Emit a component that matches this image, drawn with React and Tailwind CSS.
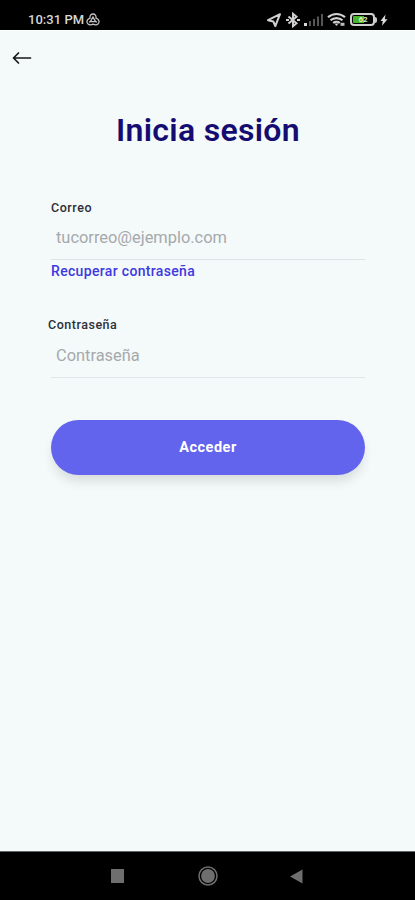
import { useState } from 'react'

function StatusBar() {
  return (
    <div className="h-[30px] bg-black flex items-center justify-between pl-[28px] pr-[27px] pt-[9px] shrink-0">
      <div className="flex items-center gap-[2px]">
        <span className="text-[13px] leading-[16px] font-medium text-[#d6d6d6] tracking-[0.030px] whitespace-nowrap">10:31 PM</span>
        <svg width="14" height="14" viewBox="0 0 14 14" fill="none" stroke="#c4c4c4" strokeWidth="1.300">
          <path d="M4 5.200C3.600 2.500 5 1 7 1s3.400 1.500 3 4.200C12.500 6 13.600 8 12.700 10c-1 2-3.500 2.300-5.700 1.200C4.800 12.300 2.300 12 1.300 10 .4 8 1.500 6 4 5.200z" />
          <path d="M7 4l2.600 4.600H4.400zM3 9.200l1.400-.6M11 9.200l-1.400-.6" />
        </svg>
      </div>
      <div className="flex items-center">
        <svg width="16" height="16" viewBox="0 0 16 16" fill="none" stroke="#d0d0d0" strokeWidth="2" strokeLinejoin="round">
          <path d="M14 2.200L2 8.200l5.300 1.300 2 4.600z" />
        </svg>
        <svg className="ml-[3px]" width="16" height="16" viewBox="0 0 16 16" fill="none" stroke="#d0d0d0" strokeWidth="2">
          <path d="M3.500 4.500l8 6.800L8 14.200V1.800l3.500 2.900-8 6.800" />
          <path d="M1 8h3M12 8h3" strokeWidth="2.200" />
        </svg>
        <svg className="ml-[3px]" width="20" height="14" viewBox="0 0 20 14">
          <path d="M0 10h3v3H0z" fill="#d8d8d8" />
          <path d="M5 8h2v5H5zM9 6h2v7H9zM13 3.500h2V13h-2zM17 1h2v12h-2z" fill="#555" />
        </svg>
        <svg className="ml-[3px]" width="19" height="15" viewBox="0 0 19 15" fill="none" stroke="#d0d0d0" strokeWidth="2.200">
          <path d="M1 5.300C5.800.9 13.200.9 18 5.300" />
          <path d="M3.500 8.300c3.300-3 8.700-3 12 0" />
          <path d="M6.200 11c1.800-1.600 4.800-1.600 6.600 0" />
          <path d="M7.500 11.500h4l-2 2.500z" fill="#d0d0d0" stroke="none" />
          <path d="M13.500 10.800h4v3h-4z" fill="#bbb" stroke="none" />
        </svg>
        <div className="relative ml-[4px] h-[13px] w-[25px] rounded-[4px] border-2 border-[#d0d0d0] p-px">
          <div className="h-full w-[11px] rounded-l-[1px] bg-[#49b52b]" />
          <span className="absolute inset-0 pl-px text-center text-[8px] leading-[9px] font-bold text-[#d5efcc]">62</span>
        </div>
        <div className="h-[6px] w-[2px] rounded-r-sm bg-[#c8c8c8]" />
        <svg className="ml-[3px]" width="8" height="14" viewBox="0 0 8 14" fill="#dedede">
          <path d="M5.500 1.500L.5 8h2.300L2 12.800l5.500-6.600H4.800z" />
        </svg>
      </div>
    </div>
  )
}

function NavBar() {
  return (
    <div className="h-[49px] bg-black border-t border-[#666] flex items-center shrink-0 pl-[111px]">
      <div className="w-[13px] h-[14px] bg-[#6e6e6e]" />
      <svg className="ml-[74px]" width="20" height="20" viewBox="0 0 20 20">
        <circle cx="10" cy="10" r="9" fill="none" stroke="#6e6e6e" strokeWidth="1.500" />
        <circle cx="10" cy="10" r="6.900" fill="#6e6e6e" />
      </svg>
      <svg className="ml-[72px]" width="13" height="15" viewBox="0 0 13 15">
        <path d="M0 7.500L12.500 .5v14z" fill="#6e6e6e" />
      </svg>
    </div>
  )
}

function App() {
  const [email, setEmail] = useState('')
  const [password, setPassword] = useState('')

  return (
    <div className="h-[900px] w-full flex flex-col bg-[#f4f9fa] font-['Roboto',sans-serif] overflow-hidden">
      <StatusBar />
      <main className="flex-1 flex flex-col border-t border-white">
        <button className="ml-[12px] mt-[19px] w-[20px] h-[16px]" aria-label="Volver">
          <svg width="20" height="16" viewBox="0 0 20 16" fill="none" stroke="#161819" strokeWidth="1.700" strokeLinecap="round" strokeLinejoin="round">
            <path d="M18.500 8H1.500M6.500 3L1.500 8l5 5" />
          </svg>
        </button>
        <h1 className="mt-[44px] pl-px text-center text-[32px] leading-[40px] font-semibold text-[#150c72] tracking-[0.3px]">Inicia sesión</h1>

        <div className="flex flex-col pl-[51px] pr-[50px]">
          <label htmlFor="email" className="mt-[50px] text-[12.500px] leading-[16px] font-medium text-[#2c2f36] tracking-[0.55px]">Correo</label>
          <input
            id="email"
            type="email"
            placeholder="tucorreo@ejemplo.com"
            value={email}
            onChange={e => setEmail(e.target.value)}
            className="h-[44px] pl-[5px] border-b border-[#dfe3e5] text-[16.400px] placeholder:text-[#a5a9ac] focus:outline-none"
          />
          <a className="mt-[3px] text-[14px] leading-[17px] font-medium text-[#4038e0] tracking-[0.330px]">Recuperar contraseña</a>
          <label htmlFor="password" className="mt-[37px] -ml-[3px] text-[12.500px] leading-[16px] font-medium text-[#2c2f36] tracking-[0.52px]">Contraseña</label>
          <input
            id="password"
            type="password"
            placeholder="Contraseña"
            value={password}
            onChange={e => setPassword(e.target.value)}
            className="h-[45px] pl-[5px] border-b border-[#e2e6e8] text-[16.400px] placeholder:text-[#a5a9ac] focus:outline-none"
          />
          <button className="mt-[42px] h-[55px] rounded-full bg-[#6264ee] text-[14.500px] font-bold text-white tracking-[0.5px] shadow-[0_8px_12px_-2px_rgba(0,0,0,0.12)]">
            Acceder
          </button>
        </div>
      </main>
      <NavBar />
    </div>
  )
}

export default App
